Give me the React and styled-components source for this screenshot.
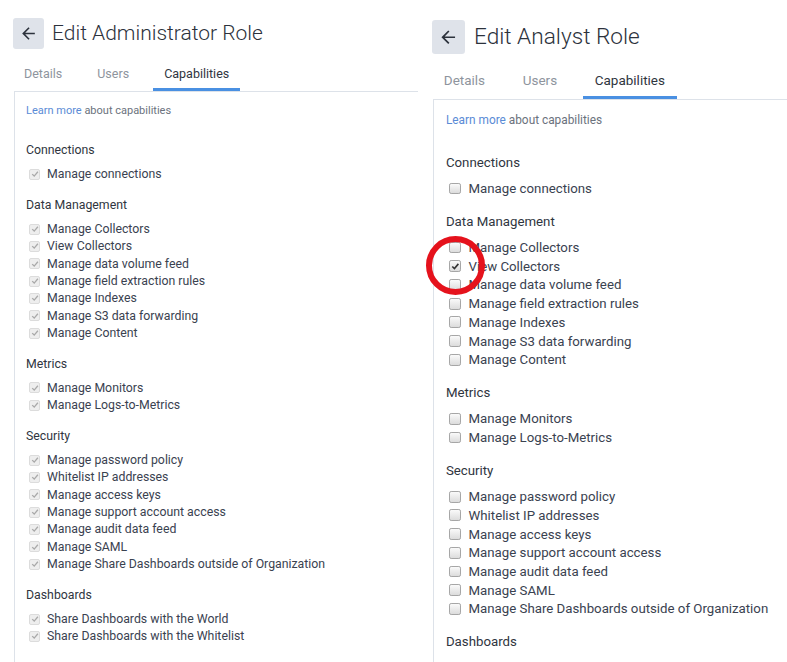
import React from "react";
import styled, { createGlobalStyle } from "styled-components";

const GlobalStyle = createGlobalStyle`
  html, body {
    margin: 0;
    padding: 0;
    background: #ffffff;
  }
  body {
    font-family: Roboto, "Liberation Sans", Arial, sans-serif;
  }
`;

const Page = styled.div`
  position: relative;
  display: flex;
  width: 787px;
  height: 662px;
  overflow: hidden;
  background: #ffffff;
`;

const Panel = styled.div`
  width: ${(p) => p.$width}px;
  height: ${(p) => 662 / p.$scale}px;
  zoom: ${(p) => p.$scale};
  padding-top: ${(p) => p.$offset || 0}px;
  box-sizing: border-box;
  flex-shrink: 0;
  overflow: hidden;
  display: flex;
  flex-direction: column;
  background: #ffffff;
`;

const Header = styled.div`
  display: flex;
  align-items: center;
  padding: 18px 0 0 13px;
`;

const BackButton = styled.button`
  width: 31px;
  height: 31px;
  border: none;
  border-radius: 3px;
  background: #dfe3ea;
  display: flex;
  align-items: center;
  justify-content: center;
  padding: 0;
  cursor: pointer;
`;

const Title = styled.h1`
  margin: 0 0 0 8px;
  font-size: 21px;
  font-weight: 300;
  color: #2c323c;
  line-height: 31px;
  white-space: nowrap;
`;

const Tabs = styled.div`
  display: flex;
  gap: 13px;
  margin: 8px 0 0 13px;
`;

const Tab = styled.div`
  padding: 9px 11px 6px;
  font-size: 12.5px;
  line-height: 16px;
  color: ${(p) => (p.$active ? "#2f3540" : "#8e949d")};
  border-bottom: 3px solid ${(p) => (p.$active ? "#4a90e2" : "transparent")};
  white-space: nowrap;
`;

const Box = styled.div`
  flex: 1;
  margin-left: 14px;
  border-top: 1px solid #dde2e9;
  border-left: 1px solid #dde2e9;
  padding: 12px 0 0 11px;
`;

const LearnMore = styled.div`
  font-size: 11px;
  line-height: 14px;
  color: #6b727d;
  white-space: nowrap;
  margin-bottom: 24px;
`;

const Link = styled.a`
  color: #5a8bd6;
  text-decoration: none;
`;

const Section = styled.div`
  margin-bottom: 14px;
`;

const SectionTitle = styled.div`
  font-size: 12.3px;
  line-height: 17px;
  color: #2f3540;
  margin-bottom: 6.5px;
  white-space: nowrap;
`;

const Row = styled.label`
  display: flex;
  align-items: center;
  height: 17.35px;
  padding-left: 3px;
  gap: 7px;
  font-size: 12.3px;
  color: #3a4250;
  white-space: nowrap;
`;

const Check = styled.span`
  width: 11px;
  height: 11px;
  box-sizing: border-box;
  border-radius: 2px;
  flex-shrink: 0;
  display: flex;
  align-items: center;
  justify-content: center;
  border: 1px solid ${(p) => (p.$disabled ? "#dcdcdc" : "#a6a6a6")};
  background: ${(p) =>
    p.$disabled ? "#eeeeee" : "linear-gradient(#fafafa, #dcdcdc)"};
`;

const Annotation = styled.div`
  position: absolute;
  left: 426px;
  top: 236px;
  width: 59px;
  height: 59px;
  box-sizing: border-box;
  border: 6px solid #e5121c;
  border-radius: 50%;
  pointer-events: none;
`;

const sections = [
  { title: "Connections", items: ["Manage connections"] },
  {
    title: "Data Management",
    items: [
      "Manage Collectors",
      "View Collectors",
      "Manage data volume feed",
      "Manage field extraction rules",
      "Manage Indexes",
      "Manage S3 data forwarding",
      "Manage Content",
    ],
  },
  { title: "Metrics", items: ["Manage Monitors", "Manage Logs-to-Metrics"] },
  {
    title: "Security",
    items: [
      "Manage password policy",
      "Whitelist IP addresses",
      "Manage access keys",
      "Manage support account access",
      "Manage audit data feed",
      "Manage SAML",
      "Manage Share Dashboards outside of Organization",
    ],
  },
  {
    title: "Dashboards",
    items: [
      "Share Dashboards with the World",
      "Share Dashboards with the Whitelist",
    ],
  },
];

const ArrowBack = () => (
  <svg width="19" height="19" viewBox="0 0 24 24">
    <path
      d="M20 11H7.83l5.59-5.59L12 4l-8 8 8 8 1.41-1.41L7.83 13H20v-2z"
      fill="#2c323c"
    />
  </svg>
);

const Checkbox = ({ checked, disabled }) => (
  <Check $disabled={disabled}>
    {checked && (
      <svg width="8" height="8" viewBox="0 0 10 10">
        <path
          d="M1.5 5.2 L4 7.6 L8.6 2.2"
          fill="none"
          stroke={disabled ? "#a9a9a9" : "#333333"}
          strokeWidth={disabled ? 1.6 : 1.9}
        />
      </svg>
    )}
  </Check>
);

const RolePanel = ({ title, width, scale, offset, isChecked, disabled }) => (
  <Panel $width={width} $scale={scale} $offset={offset}>
    <Header>
      <BackButton>
        <ArrowBack />
      </BackButton>
      <Title>{title}</Title>
    </Header>
    <Tabs>
      <Tab>Details</Tab>
      <Tab>Users</Tab>
      <Tab $active>Capabilities</Tab>
    </Tabs>
    <Box>
      <LearnMore>
        <Link href="#">Learn more</Link> about capabilities
      </LearnMore>
      {sections.map((s) => (
        <Section key={s.title}>
          <SectionTitle>{s.title}</SectionTitle>
          {s.items.map((item) => (
            <Row key={item}>
              <Checkbox checked={isChecked(item)} disabled={disabled} />
              {item}
            </Row>
          ))}
        </Section>
      ))}
    </Box>
  </Panel>
);

export default function App() {
  return (
    <Page>
      <GlobalStyle />
      <RolePanel
        title="Edit Administrator Role"
        width={418}
        scale={1}
        isChecked={() => true}
        disabled
      />
      <RolePanel
        title="Edit Analyst Role"
        width={369 / 1.078}
        scale={1.078}
        offset={1}
        isChecked={(item) => item === "View Collectors"}
      />
      <Annotation />
    </Page>
  );
}
